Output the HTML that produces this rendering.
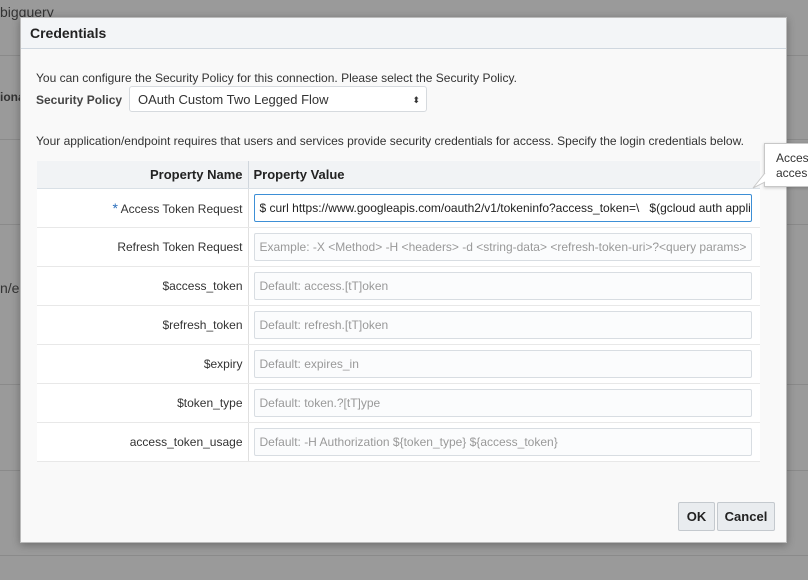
<!DOCTYPE html>
<html><head><style>
body{margin:0;width:808px;height:580px;background:#9a9a9a;font-family:"Liberation Sans",Arial,sans-serif;font-size:12px;color:#333;position:relative;overflow:hidden}
.bgl{position:absolute;left:0;width:808px;height:1px;background:#8a8a8a}
.dlg{position:absolute;left:20px;top:17px;width:765px;height:524px;background:#f9f9f9;border:1px solid #bbb;box-shadow:0 2px 8px rgba(0,0,0,.3)}
.hdr{height:30px;background:#f3f5f7;border-bottom:1px solid #cfd7df;font-weight:bold;font-size:14px;line-height:30px;padding-left:9px;color:#222}
.t{position:absolute;white-space:nowrap}
table{position:absolute;left:16px;top:143px;width:723px;border-collapse:collapse;background:#fff;table-layout:fixed}
th{background:#f1f3f5;height:27px;font-size:13px;color:#222;border-bottom:1px solid #d9e0e6;padding:0 5px;box-sizing:border-box}
td{height:39px;border-bottom:1px solid #e8e8e8;padding:0;font-size:12px;box-sizing:border-box}
td.n{text-align:right;padding-right:5px;border-right:1px solid #e0e0e0;white-space:nowrap}
th.n{text-align:right;border-right:1px solid #d0d6dc}
th.v{text-align:left}
.in{margin:0 8px 0 5px;height:28px;box-sizing:border-box;border:1px solid #d8dde2;border-radius:2px;background:#fbfcfd;color:#999;line-height:26px;padding-left:5px;white-space:nowrap;overflow:hidden}
.in.f{border:1px solid #3d8fd6;color:#222;background:#fff}
.btn{position:absolute;top:484px;height:27px;border:1px solid #c4c9ce;border-radius:2px;background:#e9ecef;font-weight:bold;font-size:13px;line-height:27px;text-align:center;color:#222}
</style></head><body>
<div class="bgl" style="top:55px"></div><div class="bgl" style="top:139px"></div><div class="bgl" style="top:224px"></div><div class="bgl" style="top:384px"></div><div class="bgl" style="top:470px"></div><div class="bgl" style="top:555px"></div>
<div class="t" style="left:0;top:4px;font-size:14px;color:#333">bigquery</div>
<div class="t" style="left:0;top:90px;font-weight:bold;color:#333">iona</div>
<div class="t" style="left:0;top:280px;font-size:14px;color:#333">n/e</div>
<div class="dlg">
<div class="hdr">Credentials</div>
<div class="t" style="left:15px;top:53px">You can configure the Security Policy for this connection. Please select the Security Policy.</div>
<div class="t" style="left:15px;top:75px;font-weight:bold;color:#444">Security Policy</div>
<div style="position:absolute;left:108px;top:68px;width:298px;height:26px;border:1px solid #d6dade;border-radius:3px;background:#fff;font-size:13px;line-height:26px;padding-left:8px;box-sizing:border-box">OAuth Custom Two Legged Flow<span style="position:absolute;right:6px;top:0;font-size:9px">&#x2B0D;</span></div>
<div class="t" style="left:15px;top:116px">Your application/endpoint requires that users and services provide security credentials for access. Specify the login credentials below.</div>
<table>
<colgroup><col style="width:211px"><col style="width:512px"></colgroup>
<tr><th class="n">Property Name</th><th class="v">Property Value</th></tr>
<tr><td class="n"><span style="color:#2a6ebb;font-size:14px">*</span> Access Token Request</td><td><div class="in f">$ curl https://www.googleapis.com/oauth2/v1/tokeninfo?access_token=\&nbsp;&nbsp; $(gcloud auth application-default print-access-token)</div></td></tr>
<tr><td class="n">Refresh Token Request</td><td><div class="in">Example: -X &lt;Method&gt; -H &lt;headers&gt; -d &lt;string-data&gt; &lt;refresh-token-uri&gt;?&lt;query params&gt;</div></td></tr>
<tr><td class="n">$access_token</td><td><div class="in">Default: access.[tT]oken</div></td></tr>
<tr><td class="n">$refresh_token</td><td><div class="in">Default: refresh.[tT]oken</div></td></tr>
<tr><td class="n">$expiry</td><td><div class="in">Default: expires_in</div></td></tr>
<tr><td class="n">$token_type</td><td><div class="in">Default: token.?[tT]ype</div></td></tr>
<tr><td class="n">access_token_usage</td><td><div class="in">Default: -H Authorization ${token_type} ${access_token}</div></td></tr>
</table>
<div class="btn" style="left:657px;width:35px">OK</div>
<div class="btn" style="left:696px;width:56px">Cancel</div>
</div>
<div style="position:absolute;left:764px;top:143px;width:60px;height:44px;background:#fff;border:1px solid #c8c8c8;box-shadow:0 1px 3px rgba(0,0,0,.2);font-size:12px;line-height:15px;padding:7px 0 0 11px;box-sizing:border-box;color:#333">Acces<br>acces</div>
<svg style="position:absolute;left:752px;top:172px" width="14" height="18"><path d="M13 1 L1 16 L13 10" fill="#fff" stroke="#c8c8c8"/></svg>
</body></html>
